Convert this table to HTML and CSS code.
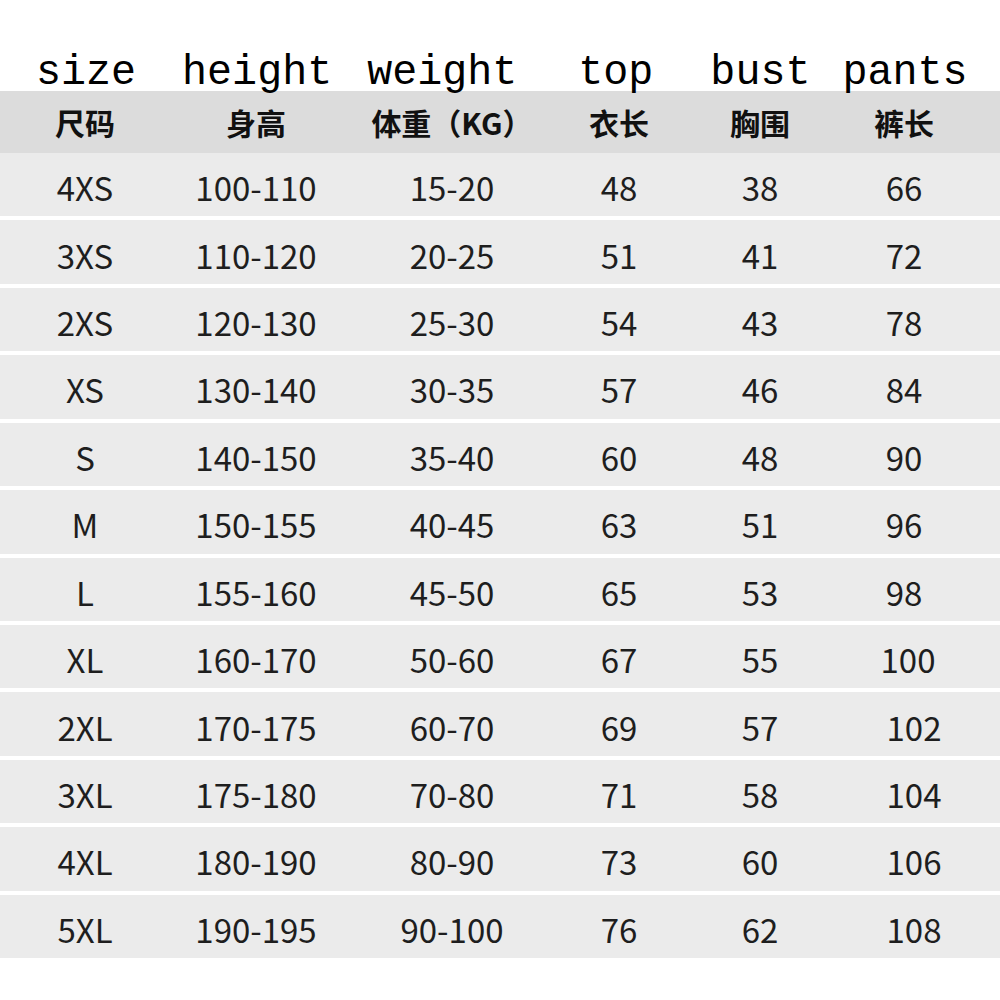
FILE: index.html
```html
<!DOCTYPE html>
<html lang="zh">
<head>
<meta charset="utf-8">
<title>Size chart</title>
<link rel="stylesheet" href="styles.css">
</head>
<body>
<div class="page">
  <div class="labels">
    <span class="w w-size">size</span>
    <span class="w w-height">height</span>
    <span class="w w-weight">weight</span>
    <span class="w w-top">top</span>
    <span class="w w-bust">bust</span>
    <span class="w w-pants">pants</span>
  </div>
  <div class="row head">
    <div>尺码</div><div>身高</div><div>体重（KG）</div><div>衣长</div><div>胸围</div><div>裤长</div>
  </div>
  <div class="rows">
    <div class="row"><div>4XS</div><div>100-110</div><div>15-20</div><div>48</div><div>38</div><div>66</div></div>
    <div class="row"><div>3XS</div><div>110-120</div><div>20-25</div><div>51</div><div>41</div><div>72</div></div>
    <div class="row"><div>2XS</div><div>120-130</div><div>25-30</div><div>54</div><div>43</div><div>78</div></div>
    <div class="row"><div>XS</div><div>130-140</div><div>30-35</div><div>57</div><div>46</div><div>84</div></div>
    <div class="row"><div>S</div><div>140-150</div><div>35-40</div><div>60</div><div>48</div><div>90</div></div>
    <div class="row"><div>M</div><div>150-155</div><div>40-45</div><div>63</div><div>51</div><div>96</div></div>
    <div class="row"><div>L</div><div>155-160</div><div>45-50</div><div>65</div><div>53</div><div>98</div></div>
    <div class="row"><div>XL</div><div>160-170</div><div>50-60</div><div>67</div><div>55</div><div class="wide">100</div></div>
    <div class="row"><div>2XL</div><div>170-175</div><div>60-70</div><div>69</div><div>57</div><div class="wide2">102</div></div>
    <div class="row"><div>3XL</div><div>175-180</div><div>70-80</div><div>71</div><div>58</div><div class="wide2">104</div></div>
    <div class="row"><div>4XL</div><div>180-190</div><div>80-90</div><div>73</div><div>60</div><div class="wide2">106</div></div>
    <div class="row"><div>5XL</div><div>190-195</div><div>90-100</div><div>76</div><div>62</div><div class="wide2">108</div></div>
  </div>
</div>
</body>
</html>
```

FILE: styles.css
```css
html, body {
  margin: 0;
  padding: 0;
  background: #ffffff;
}

.page {
  width: 1000px;
  height: 1000px;
  overflow: hidden;
  background: #ffffff;
}

.labels {
  box-sizing: border-box;
  height: 91px;
  padding: 52px 0 0 36px;
  display: flex;
  font-family: "Liberation Mono", "DejaVu Sans Mono", monospace;
  font-size: 41.7px;
  line-height: 42px;
  color: #000;
  white-space: pre;
}

.w-height { margin-left: 46px; }
.w-weight { margin-left: 35px; }
.w-top { margin-left: 61px; }
.w-bust { margin-left: 57px; }
.w-pants { margin-left: 32px; }

.row {
  display: grid;
  grid-template-columns: 170px 172px 220px 114px 168px 120px;
  align-items: center;
  justify-items: center;
  background: #ebebeb;
  font-family: "Noto Sans CJK SC", "Noto Sans", sans-serif;
  font-size: 33px;
  color: #1e1e1e;
  box-sizing: border-box;
  padding-top: 5px;
}

.row.head {
  height: 62px;
  padding-top: 0;
  background: #dcdcdc;
  font-size: 30px;
  font-weight: bold;
  color: #111;
}

.rows {
  display: grid;
  grid-template-rows: repeat(12, 1fr);
  row-gap: 4px;
  height: 805px;
  background: #ffffff;
}

.wide {
  padding-left: 8px;
}

.wide2 {
  padding-left: 20px;
}
```
